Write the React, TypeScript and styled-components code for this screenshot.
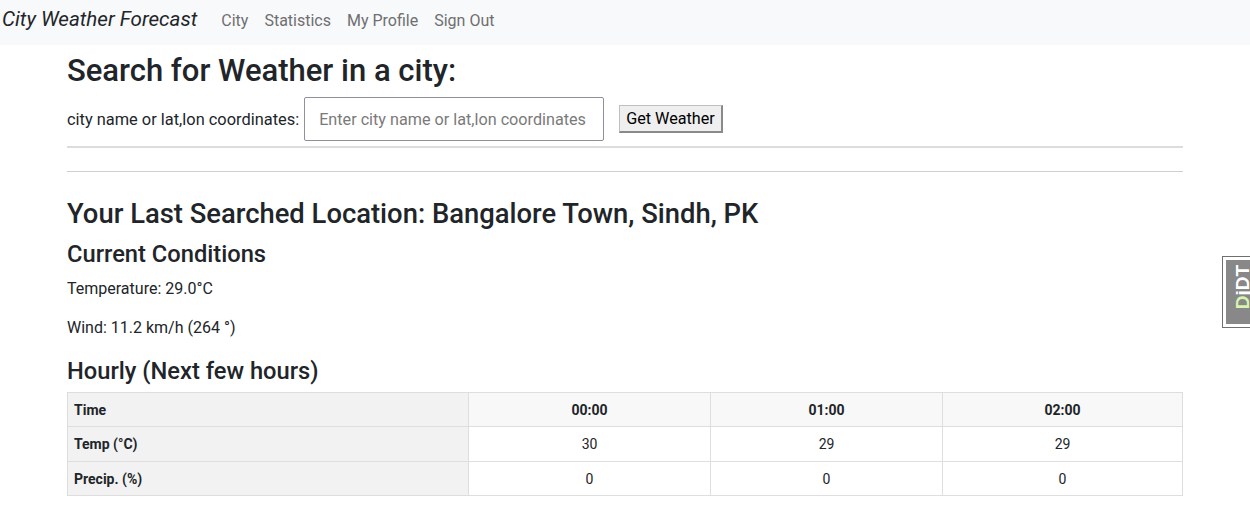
import React from "react";
import styled, { createGlobalStyle } from "styled-components";

const Global = createGlobalStyle`
  html, body { margin: 0; padding: 0; background: #fff; }
  body { font-family: Roboto, "Liberation Sans", sans-serif; color: #212529; }
  * { box-sizing: border-box; }
`;

const Navbar = styled.nav`
  height: 45px;
  background: #f8f9fa;
  display: flex;
  align-items: baseline;
  padding: 4px 2px 0;
  line-height: 30px;
`;

const Brand = styled.a`
  font-size: 20.6px;
  font-style: italic;
  color: #212529;
  margin-right: 24px;
  text-decoration: none;
`;

const NavLinks = styled.div`
  display: flex;
  align-items: baseline;
  gap: 16px;
`;

const NavLink = styled.a`
  font-size: 16px;
  color: #6e6f71;
  text-decoration: none;
`;

const Container = styled.main`
  width: 1116px;
  margin: 0 auto;
`;

const H2 = styled.h2`
  font-size: 31px;
  font-weight: 500;
  margin: 7px 0 8px;
  line-height: 1.2;
`;

const Form = styled.form`
  display: flex;
  align-items: center;
  padding-bottom: 5px;
  border-bottom: 2px solid #dcdcdc;
`;

const Label = styled.label`
  font-size: 16.4px;
  margin-right: 5px;
`;

const Input = styled.input`
  width: 300px;
  height: 44px;
  border: 1px solid #8f8f9d;
  border-radius: 2px;
  padding: 0 8px 0 14px;
  font-size: 16.2px;
  font-family: inherit;
  &::placeholder { color: #7a7a7a; }
`;

const Button = styled.button`
  margin-left: 15px;
  height: 28px;
  padding: 0 6px;
  font-size: 16.2px;
  font-family: inherit;
  background: #efefef;
  border-style: solid;
  border-width: 1px 2px 2px 1px;
  border-color: #c0c0c0 #8a8a8a #8a8a8a #c0c0c0;
  color: #000;
`;

const Rule = styled.hr`
  border: 0;
  border-top: 1px solid #cfcfcf;
  margin: 23px 0 0;
`;

const H3 = styled.h3`
  font-size: 27.4px;
  font-weight: 500;
  margin: 26px 0 0;
  line-height: 1.2;
`;

const H4 = styled.h4<{ $top: number }>`
  font-size: 23.7px;
  font-weight: 500;
  margin: ${(p) => p.$top}px 0 0;
  line-height: 1.2;
`;

const Para = styled.p<{ $top: number }>`
  font-size: 16px;
  margin: ${(p) => p.$top}px 0 0;
  line-height: 1.5;
`;

const Table = styled.table`
  width: 100%;
  border-collapse: collapse;
  table-layout: fixed;
  margin-top: 7px;
  font-size: 14px;
`;

const RowHead = styled.th`
  background: #f2f2f2;
  text-align: left;
  font-weight: 700;
  border: 1px solid #dedede;
  padding: 0 6px;
  height: 34.5px;
`;

const ColHead = styled.th`
  background: #f8f8f8;
  text-align: center;
  font-weight: 700;
  border: 1px solid #dedede;
  height: 34.5px;
`;

const Cell = styled.td`
  text-align: center;
  border: 1px solid #dedede;
  height: 34.5px;
`;

const Handle = styled.div`
  position: fixed;
  left: 1222px;
  top: 256px;
  width: 40px;
  height: 72px;
  border: 1px solid #6f6f6f;
  background: #fff;
  padding: 3px;
  display: flex;
`;

const HandleInner = styled.div`
  flex: 1;
  background: #888;
  display: flex;
  align-items: flex-start;
  padding: 5px 0 0 7px;
`;

const HandleText = styled.span`
  writing-mode: vertical-rl;
  transform: rotate(180deg);
  font-size: 19px;
  font-weight: 700;
  color: #fff;
  font-family: "Liberation Sans", sans-serif;
  line-height: 1;
`;

const Green = styled.span`
  color: #d6f5b0;
`;

const hours = ["00:00", "01:00", "02:00"];
const temps = ["30", "29", "29"];
const precip = ["0", "0", "0"];
const colWidths = [401, 242, 232, undefined];

export default function App() {
  return (
    <>
      <Global />
      <Navbar>
        <Brand>City Weather Forecast</Brand>
        <NavLinks>
          <NavLink>City</NavLink>
          <NavLink>Statistics</NavLink>
          <NavLink>My Profile</NavLink>
          <NavLink>Sign Out</NavLink>
        </NavLinks>
      </Navbar>
      <Container>
        <H2>Search for Weather in a city:</H2>
        <Form onSubmit={(e) => e.preventDefault()}>
          <Label>city name or lat,lon coordinates:</Label>
          <Input placeholder="Enter city name or lat,lon coordinates" />
          <Button type="submit">Get Weather</Button>
        </Form>
        <Rule />
        <H3>Your Last Searched Location: Bangalore Town, Sindh, PK</H3>
        <H4 $top={9}>Current Conditions</H4>
        <Para $top={8}>Temperature: 29.0°C</Para>
        <Para $top={15}>Wind: 11.2 km/h (264 °)</Para>
        <H4 $top={17}>Hourly (Next few hours)</H4>
        <Table>
          <colgroup>
            {colWidths.map((w, i) => (
              <col key={i} style={w ? { width: `${w}px` } : undefined} />
            ))}
          </colgroup>
          <tbody>
            <tr>
              <RowHead>Time</RowHead>
              {hours.map((h) => (
                <ColHead key={h}>{h}</ColHead>
              ))}
            </tr>
            <tr>
              <RowHead>Temp (°C)</RowHead>
              {temps.map((t, i) => (
                <Cell key={i}>{t}</Cell>
              ))}
            </tr>
            <tr>
              <RowHead>Precip. (%)</RowHead>
              {precip.map((p, i) => (
                <Cell key={i}>{p}</Cell>
              ))}
            </tr>
          </tbody>
        </Table>
      </Container>
      <Handle>
        <HandleInner>
          <HandleText>
            <Green>D</Green>jDT
          </HandleText>
        </HandleInner>
      </Handle>
    </>
  );
}
